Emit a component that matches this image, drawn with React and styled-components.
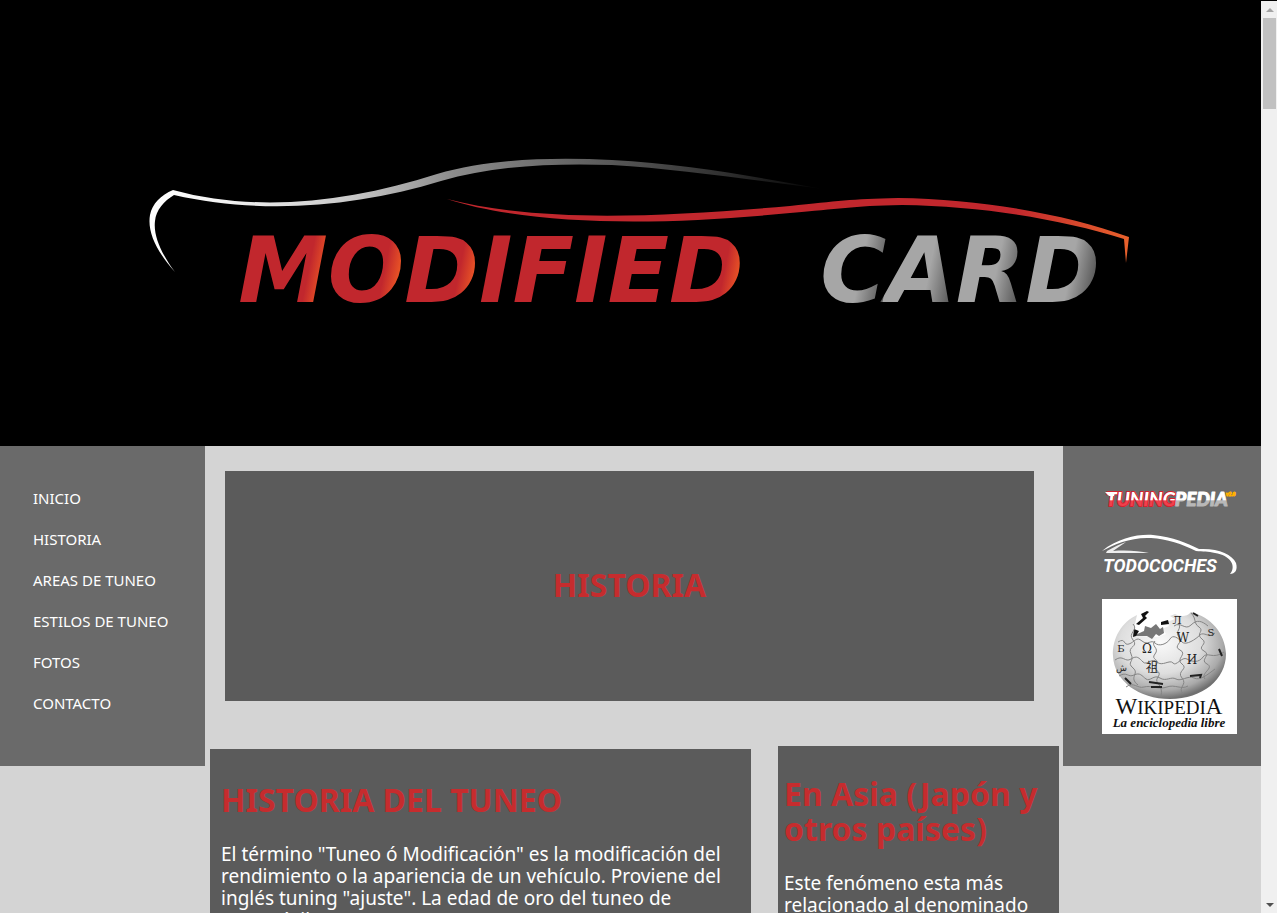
import React from "react";
import styled, { createGlobalStyle } from "styled-components";

const GlobalStyle = createGlobalStyle`
  * { box-sizing: border-box; }
  html, body { margin: 0; background: #d4d4d4; }
  body { font-family: "Lucida Sans", "Lucida Grande", "Noto Sans", "Open Sans", sans-serif; color: #fff; }
`;

const Shell = styled.div`
  display: flex;
  height: 100vh;
  overflow: hidden;
`;

const Page = styled.div`
  flex: 1;
  min-width: 0;
  overflow: hidden;
`;

const Banner = styled.header`
  background: #000;
  svg { display: block; width: 100%; height: auto; }
`;

const Columns = styled.div`
  display: flex;
  align-items: flex-start;
`;

const SideNav = styled.nav`
  width: 205px;
  height: 320px;
  flex: none;
  padding: 32px 0 0 33px;
  background: #6a6a6a;
`;

const NavList = styled.ul`
  list-style: none;
  margin: 0;
  padding: 0;
`;

const NavLink = styled.a`
  display: block;
  color: #fff;
  text-decoration: none;
  font-size: 15px;
  line-height: 41px;
  white-space: nowrap;
`;

const Main = styled.main`
  flex: 1;
  min-width: 0;
`;

const Title = styled.h1`
  margin: 0;
  color: #c62c2e;
  font-size: 32px;
  line-height: 35px;
  font-weight: 700;
`;

const Hero = styled.section`
  display: flex;
  align-items: center;
  justify-content: center;
  height: 230px;
  margin: 25px 29px 0 20px;
  padding-bottom: 4px;
  background: #5b5b5b;
`;

const Articles = styled.div`
  display: grid;
  grid-template-columns: minmax(0, 541fr) minmax(0, 281fr);
  align-items: start;
  gap: 27px;
  padding: 45px 4px 0 5px;
`;

const Article = styled.article`
  margin-top: ${(p) => p.$top || 0}px;
  padding: ${(p) => p.$pad};
  background: #5b5b5b;
`;

const Text = styled.p`
  margin: 26px 0 0;
  font-size: 19px;
  line-height: 22px;
`;

const Sponsors = styled.aside`
  display: flex;
  flex-direction: column;
  width: 198px;
  height: 320px;
  flex: none;
  padding: 42px 24px 0 39px;
  background: #6a6a6a;
`;

const SponsorLink = styled.a`
  display: block;
  margin-bottom: ${(p) => p.$gap}px;
  svg { display: block; overflow: visible; }
`;

const ScrollTrack = styled.div`
  display: flex;
  flex-direction: column;
  align-items: center;
  justify-content: space-between;
  width: 16px;
  flex: none;
  border-top: 1px solid #000;
  background: #f0f0f0;
  svg { display: block; }
`;

const ScrollTop = styled.div`
  display: flex;
  flex-direction: column;
`;

const Thumb = styled.div`
  width: 13px;
  height: 91px;
  margin-left: 1px;
  background: #c1c1c1;
`;

const Arrow = ({ up }) => (
  <svg width="15" height="17" viewBox="0 0 15 17" aria-hidden="true">
    <path d={up ? "M4 11L8 7L12 11Z" : "M4 7L12 7L8 11Z"} fill={up ? "#a3a3a3" : "#505050"} />
  </svg>
);

// Right-hand edges of the letters that carry a highlight, measured on the baseline.
const redEdges = [320, 396, 471, 736];
const greyEdges = [882, 951, 1018, 1092];
const SLANT = 0.2;

const WordGradient = ({ id, edges, start, end, base, tip, lead }) => {
  const length = (end - start) / (1 + SLANT * SLANT);
  const at = (v) => (v - start) / (end - start);
  return (
    <linearGradient id={id} gradientUnits="userSpaceOnUse" x1={start} y1="302" x2={start + length} y2={302 + length * SLANT}>
      {edges.flatMap((x) => [
        <stop key={`${x}a`} offset={at(x - lead)} stopColor={base} />,
        <stop key={`${x}b`} offset={at(x)} stopColor={tip} />,
        <stop key={`${x}c`} offset={at(x + 1)} stopColor={base} />,
      ])}
    </linearGradient>
  );
};

const Logo = () => (
  <svg viewBox="0 0 1261 446" role="img" aria-label="Modified Card">
    <defs>
      <linearGradient id="roof" gradientUnits="userSpaceOnUse" x1="150" y1="0" x2="825" y2="0">
        <stop offset="0" stopColor="#fff" />
        <stop offset=".12" stopColor="#f0f0f0" />
        <stop offset=".3" stopColor="#c8c8c8" />
        <stop offset=".45" stopColor="#8c8c8c" />
        <stop offset=".65" stopColor="#606060" />
        <stop offset=".85" stopColor="#303030" />
        <stop offset="1" stopColor="#000" />
      </linearGradient>
      <linearGradient id="body" gradientUnits="userSpaceOnUse" x1="447" y1="0" x2="1128" y2="0">
        <stop offset="0" stopColor="#c1272d" />
        <stop offset=".83" stopColor="#c1272d" />
        <stop offset="1" stopColor="#e8612c" />
      </linearGradient>
      <WordGradient id="redWord" edges={redEdges} start={220} end={770} base="#c1272d" tip="#ef5a24" lead={18} />
      <WordGradient id="greyWord" edges={greyEdges} start={800} end={1120} base="#a6a6a6" tip="#555" lead={28} />
    </defs>
    <path
      fill="url(#roof)"
      d="M175 272C157 252 147 232 150 215C152 204 161 195 173 190C257 213 350 202 437 174C490 159 550 157 612 160C690 164 760 178 824 189C750 180 680 169 612 165C550 163 493 166 441 181C356 207 262 215 174 195C164 201 156 210 155 221C153 237 163 256 175 272Z"
    />
    <path
      fill="url(#body)"
      d="M447 199C540 223 660 217 790 206C838 201 850 199 898 198C981 199 1065 214 1129 237L1126 263L1124 239C1061 219 981 206 902 205C850 206 840 209 790 213C660 226 530 226 447 199Z"
    />
    <g fontFamily="'DejaVu Sans', sans-serif" fontWeight="700" fontStyle="italic" fontSize="90" textAnchor="middle">
      <text x="491" y="302" fill="url(#redWord)">MODIFIED</text>
      <text x="960" y="302" fill="url(#greyWord)">CARD</text>
    </g>
  </svg>
);

const TuningPedia = () => (
  <svg width="135" height="22" viewBox="0 0 135 22" role="img" aria-label="TuningPedia">
    <defs>
      <linearGradient id="tuning" gradientUnits="userSpaceOnUse" x1="0" y1="4" x2="0" y2="18">
        <stop offset=".58" stopColor="#fff" />
        <stop offset=".62" stopColor="#f0404c" />
      </linearGradient>
      <linearGradient id="pedia" gradientUnits="userSpaceOnUse" x1="0" y1="4" x2="0" y2="18">
        <stop offset=".58" stopColor="#fff" />
        <stop offset=".62" stopColor="#b8b8b8" />
      </linearGradient>
    </defs>
    <g fontFamily="Lato, sans-serif" fontWeight="900" fontStyle="italic" fontSize="19" strokeLinejoin="round">
      <text x="4" y="18" fill="url(#tuning)" stroke="#d3222f" strokeWidth="2" paintOrder="stroke">TUNING</text>
      <text x="73" y="18" fill="url(#pedia)" stroke="url(#pedia)" strokeWidth="1">PEDIA</text>
      <text x="124" y="8" fontSize="5" fill="#ffb000" stroke="#ffb000" strokeWidth="1">v2.0</text>
    </g>
    <path d="M3 4H13L12 8H7Z" fill="#fff" />
  </svg>
);

const TodoCoches = () => (
  <svg width="135" height="42" viewBox="0 0 135 42" role="img" aria-label="TodoCoches">
    <path fill="#fff" d="M0 18C16 5 36 1 51 2C72 4 84 10 97 16C116 15 130 21 134 30C136 37 133 41 128 41C135 33 128 22 113 20C106 18 101 19 94 18C80 11 65 6 49 5C29 4 13 11 0 18Z" />
    <path fill="#eee" d="M5 18C12 14 18 11 24 9L11 18C25 17 37 18 47 20L4 20Z" />
    <text x="1" y="39" fill="#fff" fontFamily="Roboto, sans-serif" fontWeight="700" fontStyle="italic" fontSize="18">
      TODOCOCHES
    </text>
  </svg>
);

const Wikipedia = () => (
  <svg width="135" height="135" viewBox="0 0 135 135" role="img" aria-label="Wikipedia, la enciclopedia libre">
    <defs>
      <radialGradient id="globe" cx=".42" cy=".35" r=".65">
        <stop offset="0" stopColor="#fafafa" />
        <stop offset=".55" stopColor="#dedede" />
        <stop offset=".85" stopColor="#aaa" />
        <stop offset="1" stopColor="#707070" />
      </radialGradient>
    </defs>
    <rect width="135" height="135" fill="#fff" />
    <path fill="url(#globe)" d="M35 16C20 23 10 39 11 57C12 82 37 100 68 100C101 100 124 80 124 55C123 34 109 18 89 13C84 19 77 17 73 15L68 17L73 20L65 23L67 27L60 30L64 35L56 38L36 37L31 34Z" />
    <path fill="#777" d="M31 37L42 32L43 27L49 29L54 25L58 30L61 28L62 34L57 37L54 35L50 40L45 37Z" />
    <path fill="#111" d="M45 12L39 15L41 19L34 25L37 26L45 19L43 17L47 13ZM32 30L37 32L34 37L31 38ZM59 23L66 21L67 25L59 26Z" />
    <g fill="none" stroke="#858585" strokeWidth="1">
      <path d="M16 43C24 38 21 47 27 45S34 37 40 42S49 40 53 44S65 45 68 40S76 39 80 43S94 40 98 36S107 40 113 34" />
      <path d="M13 61C21 55 23 64 29 60S37 59 41 63S50 58 55 63S68 60 71 64S80 57 85 60S97 64 101 58S111 61 122 53" />
      <path d="M17 77C25 72 26 79 32 76S40 77 44 80S52 75 58 79S69 77 74 80S86 76 92 79S105 76 113 70" />
      <path d="M31 25C37 31 25 34 31 41S25 47 29 55S24 63 31 69S26 78 36 86" />
      <path d="M53 42C48 47 58 49 53 55S59 60 54 66S61 71 56 78S62 84 59 98" />
      <path d="M76 24C81 30 72 32 77 38S70 47 78 51S73 60 80 65S74 72 80 79S75 88 81 95" />
      <path d="M89 14C95 20 91 24 97 28S93 35 100 40S94 48 102 52S97 61 105 65S98 74 103 80" />
      <path d="M72 27C79 22 83 32 89 26S100 22 106 27M24 88C32 82 35 90 42 88S57 91 65 88S79 91 86 87" />
    </g>
    <g fill="#222" fontFamily="'DejaVu Serif', serif" fontSize="12" textAnchor="middle">
      <text x="45" y="54">Ω</text>
      <text x="81" y="43">W</text>
      <text x="90" y="65">И</text>
      <text x="50" y="73" fontFamily="'Noto Sans CJK JP', sans-serif">祖</text>
      <text x="75" y="25" fontSize="11">Л</text>
      <text x="109" y="37" fontSize="10">S</text>
      <text x="19" y="53" fontSize="10">Б</text>
      <text x="19" y="72" fontSize="9">ش</text>
    </g>
    <path fill="none" stroke="#222" strokeWidth="2" d="M23 79L29 85M47 83L61 85M49 88L60 88M88 77L99 76L98 79M117 50L120 57M91 14L96 17" />
    <g fill="#111" fontFamily="'Liberation Serif', serif" textAnchor="middle">
      <text x="67" y="115" fontSize="19">
        <tspan fontSize="23">W</tspan>IKIPEDI<tspan fontSize="23">A</tspan>
      </text>
      <text x="67" y="128" fontSize="13" fontWeight="700" fontStyle="italic">La enciclopedia libre</text>
    </g>
  </svg>
);

const navItems = ["INICIO", "HISTORIA", "AREAS DE TUNEO", "ESTILOS DE TUNEO", "FOTOS", "CONTACTO"];

export default function App() {
  return (
    <>
      <GlobalStyle />
      <Shell>
        <Page>
          <Banner>
            <Logo />
          </Banner>
          <Columns>
            <SideNav>
              <NavList>
                {navItems.map((item) => (
                  <li key={item}>
                    <NavLink href="#">{item}</NavLink>
                  </li>
                ))}
              </NavList>
            </SideNav>
            <Main>
              <Hero>
                <Title>HISTORIA</Title>
              </Hero>
              <Articles>
                <Article $top={3} $pad="33px 24px 24px 11px">
                  <Title as="h2">HISTORIA DEL TUNEO</Title>
                  <Text>
                    El término "Tuneo ó Modificación" es la modificación del rendimiento o la apariencia de un vehículo.
                    Proviene del inglés tuning "ajuste". La edad de oro del tuneo de automóviles
                  </Text>
                </Article>
                <Article $pad="30px 6px 24px 6px">
                  <Title as="h2">En Asia (Japón y otros países)</Title>
                  <Text>Este fenómeno esta más relacionado al denominado</Text>
                </Article>
              </Articles>
            </Main>
            <Sponsors>
              <SponsorLink href="#" $gap={23}>
                <TuningPedia />
              </SponsorLink>
              <SponsorLink href="#" $gap={24}>
                <TodoCoches />
              </SponsorLink>
              <SponsorLink href="#" $gap={0}>
                <Wikipedia />
              </SponsorLink>
            </Sponsors>
          </Columns>
        </Page>
        <ScrollTrack aria-hidden="true">
          <ScrollTop>
            <Arrow up />
            <Thumb />
          </ScrollTop>
          <Arrow />
        </ScrollTrack>
      </Shell>
    </>
  );
}
